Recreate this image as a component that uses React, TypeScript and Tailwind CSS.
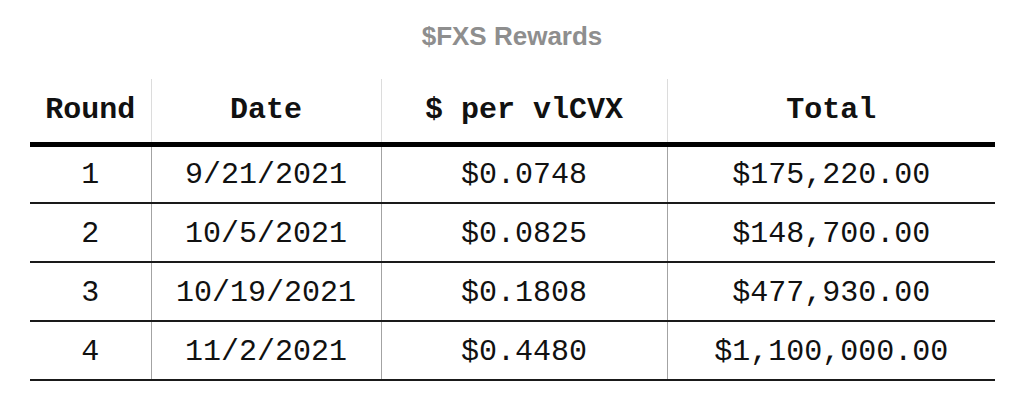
const rows = [
  { round: "1", date: "9/21/2021", per: "$0.0748", total: "$175,220.00" },
  { round: "2", date: "10/5/2021", per: "$0.0825", total: "$148,700.00" },
  { round: "3", date: "10/19/2021", per: "$0.1808", total: "$477,930.00" },
  { round: "4", date: "11/2/2021", per: "$0.4480", total: "$1,100,000.00" },
];

const mono = "font-['Courier_New','Liberation_Mono',monospace]";

export default function App() {
  return (
    <div className="w-[1024px] h-[410px] bg-white px-[30px] pt-[21px]">
      <h1 className="text-center text-[26px] leading-[30px] font-bold text-[#8e8e8e] font-['Liberation_Sans',Arial,sans-serif]">
        $FXS Rewards
      </h1>

      <table className={`mt-[28px] w-[965px] table-fixed border-collapse text-[30px] text-[#111] ${mono}`}>
        <colgroup>
          <col className="w-[121px]" />
          <col className="w-[230px]" />
          <col className="w-[286px]" />
          <col className="w-[328px]" />
        </colgroup>
        <thead>
          <tr className="h-[65px] border-b-[5px] border-black">
            <th className="font-bold text-center border-r border-[#dcdcdc]">Round</th>
            <th className="font-bold text-center border-r border-[#dcdcdc]">Date</th>
            <th className="font-bold text-center border-r border-[#dcdcdc]">$ per vlCVX</th>
            <th className="font-bold text-center">Total</th>
          </tr>
        </thead>
        <tbody>
          {rows.map((r) => (
            <tr key={r.round} className="h-[59px] border-b-2 border-[#1a1a1a]">
              <td className="text-center border-r border-[#a3a3a3] pt-[3px]">{r.round}</td>
              <td className="text-center border-r border-[#a3a3a3] pt-[3px]">{r.date}</td>
              <td className="text-center border-r border-[#a3a3a3] pt-[3px]">{r.per}</td>
              <td className="text-center pt-[3px]">{r.total}</td>
            </tr>
          ))}
        </tbody>
      </table>
    </div>
  );
}
